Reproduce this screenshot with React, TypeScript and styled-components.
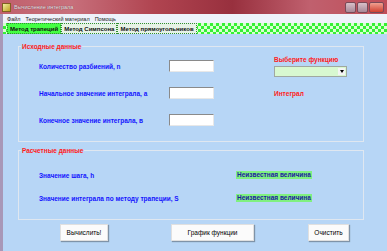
import React from 'react';
import styled, { createGlobalStyle } from 'styled-components';

const GlobalStyle = createGlobalStyle`
  html, body {
    margin: 0;
    padding: 0;
  }
  body {
    font-family: "Liberation Sans", Arial, sans-serif;
    background: #b7d6f6;
  }
`;

const Window = styled.div`
  width: 387px;
  height: 251px;
  display: flex;
  flex-direction: column;
  overflow: hidden;
  background: #b7d6f6;
`;

const TitleBar = styled.div`
  height: 14px;
  display: flex;
  align-items: center;
  padding: 0 3px 0 2px;
  background: linear-gradient(
    90deg,
    #c0606c 0%,
    #c8707c 18%,
    #b04450 40%,
    #98303e 60%,
    #c0606e 80%,
    #c04e58 100%
  );
`;

const AppIcon = styled.div`
  width: 7px;
  height: 7px;
  background: linear-gradient(135deg, #f0f0a0, #c0a020);
  border: 1px solid #806020;
  margin-right: 3px;
`;

const Title = styled.span`
  font-size: 5.5px;
  color: #f4e8ec;
  text-shadow: 0 0 1px #402028;
  flex: 1;
`;

const Controls = styled.div`
  display: flex;
  align-items: center;
  gap: 1px;
`;

const Ctl = styled.div<{ $close?: boolean; $w: number }>`
  width: ${(p) => p.$w}px;
  height: 9px;
  border: 1px solid #7a4a58;
  border-radius: 2px;
  background: ${(p) =>
    p.$close
      ? 'linear-gradient(#f0a090, #d04030)'
      : 'linear-gradient(#d8c0c8, #a88898)'};
`;

const MenuBar = styled.div`
  height: 9px;
  display: flex;
  align-items: center;
  gap: 5px;
  padding-left: 4px;
  background: #eef2fa;
  border-left: 3px solid #a898b8;
`;

const MenuItem = styled.span`
  font-size: 5.5px;
  color: #202020;
`;

const TabStrip = styled.div`
  height: 11px;
  display: flex;
  align-items: stretch;
  padding: 0 0 0 4px;
  border-left: 3px solid #a898b8;
  background-color: #d8ffd0;
  background-image: conic-gradient(
    #34f034 25%,
    #d8ffd0 0 50%,
    #34f034 0 75%,
    #d8ffd0 0
  );
  background-size: 6px 6px;
`;

const Tab = styled.div<{ $active?: boolean }>`
  display: flex;
  align-items: center;
  padding: 0 2px;
  font-size: 6px;
  font-weight: bold;
  color: #101010;
  background: ${(p) => (p.$active ? '#44ff44' : '#e6f2e6')};
  border: 1px dotted #309030;
`;

const Body = styled.div`
  flex: 1;
  display: flex;
  flex-direction: column;
  padding: 12px 0 0 15px;
  border-left: 3px solid #a898b8;
`;

const Group = styled.div<{ $top?: number }>`
  position: relative;
  width: 344px;
  margin-top: ${(p) => p.$top ?? 0}px;
  border: 1px solid #dfe7f0;
`;

const Legend = styled.span`
  position: absolute;
  top: -4px;
  left: 2px;
  padding: 0 1px;
  font-size: 6.5px;
  line-height: 7px;
  font-weight: bold;
  color: #ff2020;
  background: #b7d6f6;
`;

const SourceBody = styled.div`
  display: flex;
  padding: 9px 0 15px 20px;
`;

const InputGrid = styled.div`
  display: grid;
  grid-template-columns: 130px 45px;
  grid-auto-rows: 12px;
  row-gap: 15px;
  align-items: center;
  padding-top: 4px;
`;

const Label = styled.span`
  font-size: 6.5px;
  font-weight: bold;
  color: #1414ff;
  white-space: nowrap;
`;

const Input = styled.div`
  height: 10px;
  background: #ffffff;
  border-top: 1px solid #8a8a8a;
  border-left: 1px solid #8a8a8a;
  border-bottom: 1px solid #e8e8e8;
  border-right: 1px solid #e8e8e8;
`;

const FuncCol = styled.div`
  display: flex;
  flex-direction: column;
  margin-left: 60px;
`;

const RedText = styled.span<{ $top?: number }>`
  font-size: 6.5px;
  line-height: 7px;
  font-weight: bold;
  color: #ff2020;
  margin-top: ${(p) => p.$top ?? 0}px;
`;

const Select = styled.div`
  width: 71px;
  height: 9px;
  margin-top: 3px;
  display: flex;
  justify-content: flex-end;
  align-items: center;
  background: #d8f8d0;
  border: 1px solid #a0a8a0;
`;

const DropBtn = styled.div`
  width: 7px;
  height: 7px;
  margin-right: 1px;
  display: flex;
  align-items: center;
  justify-content: center;
  background: #f4f4f4;
`;

const ResultGrid = styled.div`
  display: grid;
  grid-template-columns: 197px auto;
  grid-auto-rows: 8px;
  row-gap: 15px;
  align-items: center;
  justify-items: start;
  padding: 20px 0 17px 20px;
`;

const Value = styled.span`
  font-size: 6.5px;
  line-height: 8px;
  font-weight: bold;
  color: #1a1aa0;
  background: #80f080;
  padding: 0 1px;
  white-space: nowrap;
`;

const ButtonRow = styled.div`
  display: flex;
  margin-top: 4px;
  padding-left: 42px;
`;

const Button = styled.div<{ $w: number; $gap: number }>`
  width: ${(p) => p.$w}px;
  height: 15px;
  margin-left: ${(p) => p.$gap}px;
  display: flex;
  align-items: center;
  justify-content: center;
  font-size: 6.5px;
  color: #000000;
  background: #fbfbfb;
  border: 1px solid #e0e0e0;
  box-shadow: 1px 1px 1px #7f93a8;
`;

export default function App() {
  return (
    <>
      <GlobalStyle />
      <Window>
        <TitleBar>
          <AppIcon />
          <Title>Вычисление интеграла</Title>
          <Controls>
            <Ctl $w={9} />
            <Ctl $w={9} />
            <Ctl $w={13} $close />
          </Controls>
        </TitleBar>
        <MenuBar>
          <MenuItem>Файл</MenuItem>
          <MenuItem>Теоретический материал</MenuItem>
          <MenuItem>Помощь</MenuItem>
        </MenuBar>
        <TabStrip>
          <Tab $active>Метод трапеций</Tab>
          <Tab>Метод Симпсона</Tab>
          <Tab>Метод прямоугольников</Tab>
        </TabStrip>
        <Body>
          <Group>
            <Legend>Исходные данные</Legend>
            <SourceBody>
              <InputGrid>
                <Label>Количество разбиений, n</Label>
                <Input />
                <Label>Начальное значение интеграла, а</Label>
                <Input />
                <Label>Конечное значение интеграла, в</Label>
                <Input />
              </InputGrid>
              <FuncCol>
                <RedText>Выберите функцию</RedText>
                <Select>
                  <DropBtn>
                    <svg width="4" height="3" viewBox="0 0 4 3">
                      <path d="M0 0h4L2 3z" fill="#000" />
                    </svg>
                  </DropBtn>
                </Select>
                <RedText $top={13}>Интеграл</RedText>
              </FuncCol>
            </SourceBody>
          </Group>
          <Group $top={8}>
            <Legend>Расчетные данные</Legend>
            <ResultGrid>
              <Label>Значение шага, h</Label>
              <Value>Неизвестная величина</Value>
              <Label>Значение интеграла по методу трапеции, S</Label>
              <Value>Неизвестная величина</Value>
            </ResultGrid>
          </Group>
          <ButtonRow>
            <Button $w={46} $gap={0}>Вычислить!</Button>
            <Button $w={81} $gap={63}>График функции</Button>
            <Button $w={39} $gap={54}>Очистить</Button>
          </ButtonRow>
        </Body>
      </Window>
    </>
  );
}
